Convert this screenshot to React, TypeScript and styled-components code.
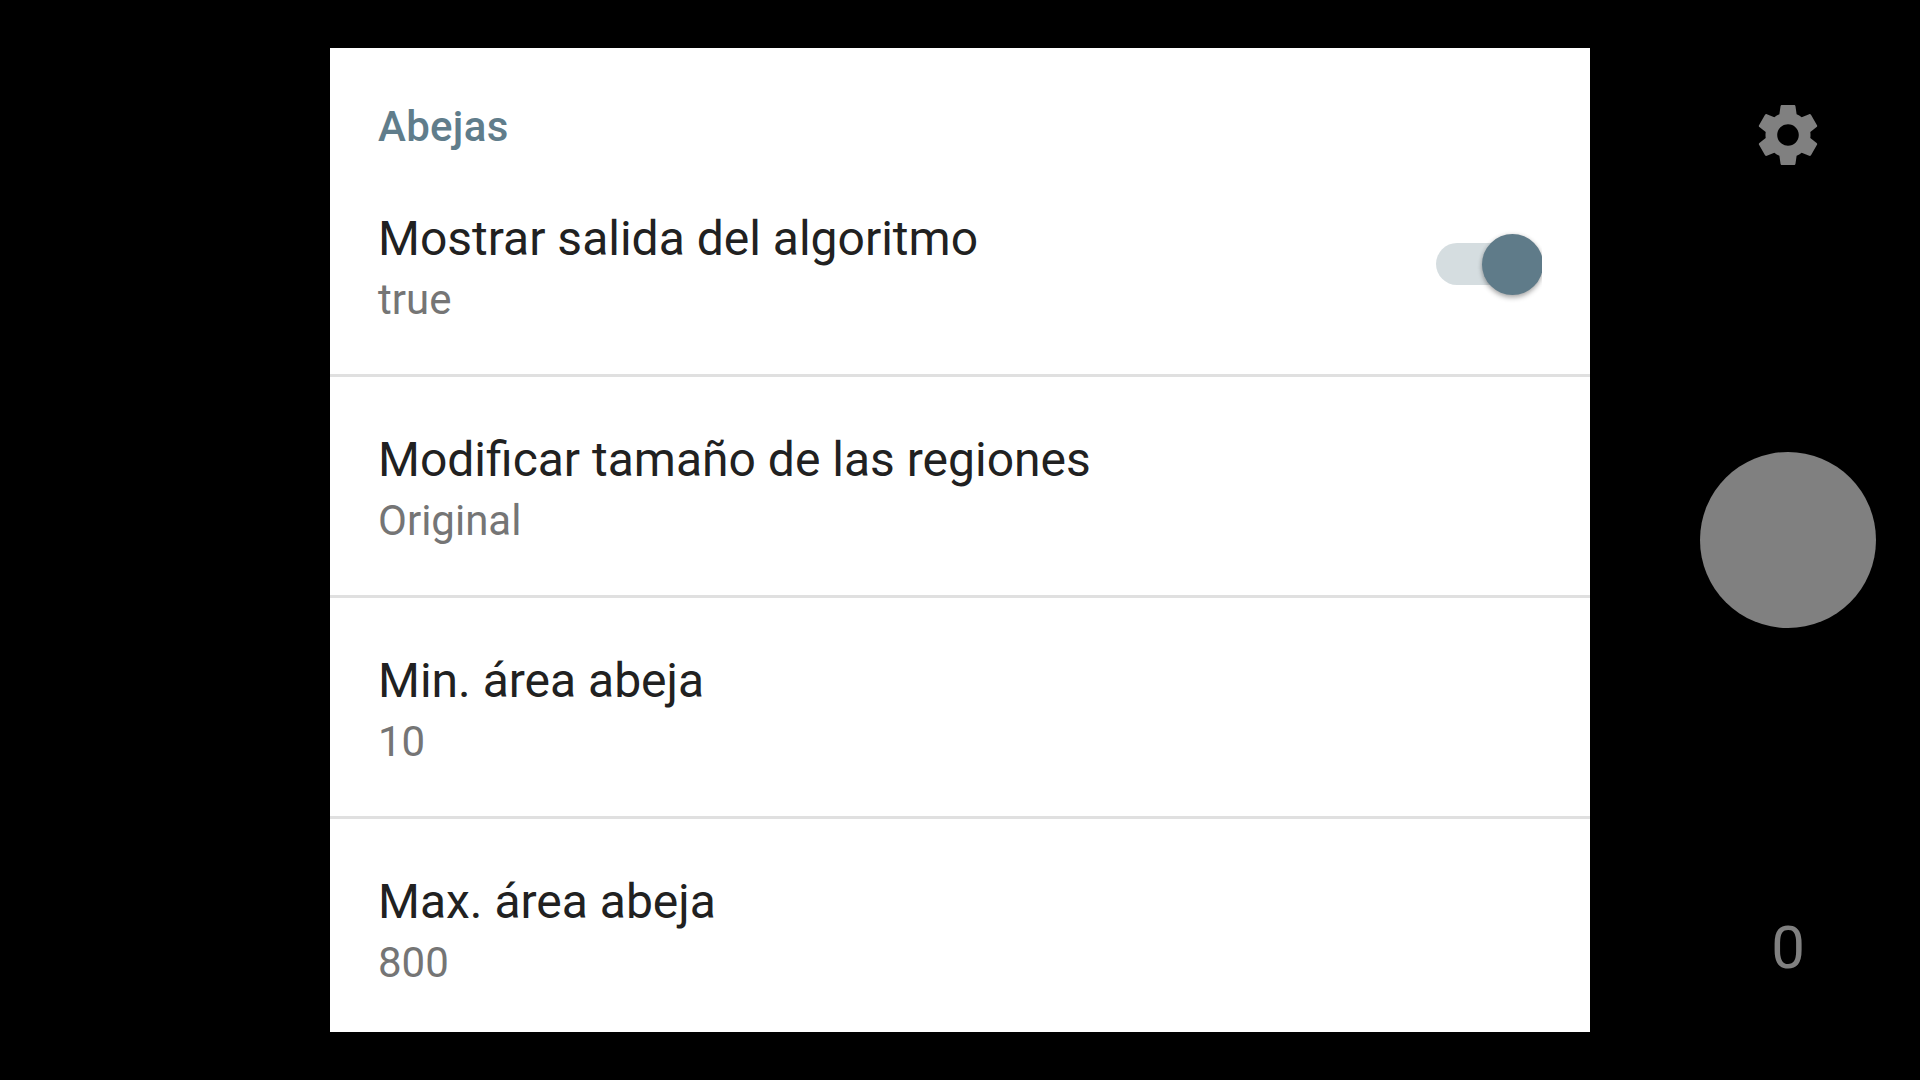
import React from 'react';
import styled, { createGlobalStyle } from 'styled-components';

const Global = createGlobalStyle`
  * { box-sizing: border-box; }
  body { margin: 0; background: #000; font-family: Roboto, 'Liberation Sans', sans-serif; }
`;
const Screen = styled.div`
  width: 1920px; height: 1080px; overflow: hidden; background: #000;
  display: grid; grid-template-columns: 330px 1260px 1fr;
`;
const Panel = styled.main`
  grid-column: 2; margin: 48px 0; height: 984px; background: #fff; overflow: hidden;
`;
const Heading = styled.h2`
  margin: 0; height: 122px; padding: 54px 48px 0; color: #607d8b;
  font-size: 42px; line-height: 50px; font-weight: 500; letter-spacing: 0.3px;
`;
const Row = styled.section<{ $first?: boolean }>`
  height: ${p => (p.$first ? 207 : 221)}px;
  padding: ${p => (p.$first ? 41 : 55)}px 48px 0;
  border-bottom: 3px solid #e0e0e0;
  display: flex; justify-content: space-between; align-items: flex-start;
`;
const Title = styled.div`
  font-size: 48px; line-height: 56px; color: #212121; white-space: nowrap;
`;
const Value = styled.div`
  margin-top: 8px; font-size: 42px; line-height: 50px; color: #757575;
`;
const Track = styled.div`
  margin-top: 32px; width: 106px; height: 42px; border-radius: 21px 0 0 21px;
  background: linear-gradient(to right, #d5dde0 75px, transparent 75px);
  display: flex; align-items: center; justify-content: flex-end;
  clip-path: inset(-20px 0 -20px 0);
`;
const Thumb = styled.div`
  flex: none; width: 61px; height: 61px; margin: 1px -1px 0 0; border-radius: 50%; background: #5f7b89;
  box-shadow: 0 3px 5px rgba(0,0,0,.28), 0 0 4px rgba(0,0,0,.12);
`;
const Side = styled.aside`
  display: flex; flex-direction: column; align-items: center; padding: 99px 0 0 66px;
`;
const Gear = styled.svg`
  width: 72px; height: 72px; fill: #808080;
`;
const Shutter = styled.div`
  margin-top: 281px; width: 176px; height: 176px; border-radius: 50%; background: #808080;
`;
const Count = styled.div`
  margin-top: 285px; font-size: 60px; line-height: 70px; color: #808080;
`;

const items = [
  { title: 'Mostrar salida del algoritmo', value: 'true', toggle: true },
  { title: 'Modificar tamaño de las regiones', value: 'Original' },
  { title: 'Min. área abeja', value: '10' },
  { title: 'Max. área abeja', value: '800' },
];

export default function App() {
  return (
    <Screen>
      <Global />
      <Panel>
        <Heading>Abejas</Heading>
        {items.map((item, i) => (
          <Row key={item.title} $first={i === 0}>
            <div>
              <Title>{item.title}</Title>
              <Value>{item.value}</Value>
            </div>
            {item.toggle && <Track role="switch" aria-checked="true"><Thumb /></Track>}
          </Row>
        ))}
      </Panel>
      <Side>
        <Gear viewBox="0 0 24 24">
          <path d="M19.43 12.98c.04-.32.07-.64.07-.98s-.03-.66-.07-.98l2.11-1.65c.19-.15.24-.42.12-.64l-2-3.46c-.12-.22-.39-.3-.61-.22l-2.49 1c-.52-.4-1.08-.73-1.69-.98l-.38-2.65C14.46 2.18 14.25 2 14 2h-4c-.25 0-.46.18-.49.42l-.38 2.65c-.61.25-1.17.59-1.69.98l-2.49-1c-.23-.09-.49 0-.61.22l-2 3.46c-.13.22-.07.49.12.64l2.11 1.65c-.04.32-.07.65-.07.98s.03.66.07.98l-2.11 1.65c-.19.15-.24.42-.12.64l2 3.46c.12.22.39.3.61.22l2.49-1c.52.4 1.08.73 1.69.98l.38 2.65c.03.24.24.42.49.42h4c.25 0 .46-.18.49-.42l.38-2.65c.61-.25 1.17-.59 1.69-.98l2.49 1c.23.09.49 0 .61-.22l2-3.46c.12-.22.07-.49-.12-.64l-2.11-1.65zM12 15.6c-1.99 0-3.6-1.61-3.6-3.6s1.61-3.6 3.6-3.6 3.6 1.61 3.6 3.6-1.61 3.6-3.6 3.6z" />
        </Gear>
        <Shutter />
        <Count>0</Count>
      </Side>
    </Screen>
  );
}
